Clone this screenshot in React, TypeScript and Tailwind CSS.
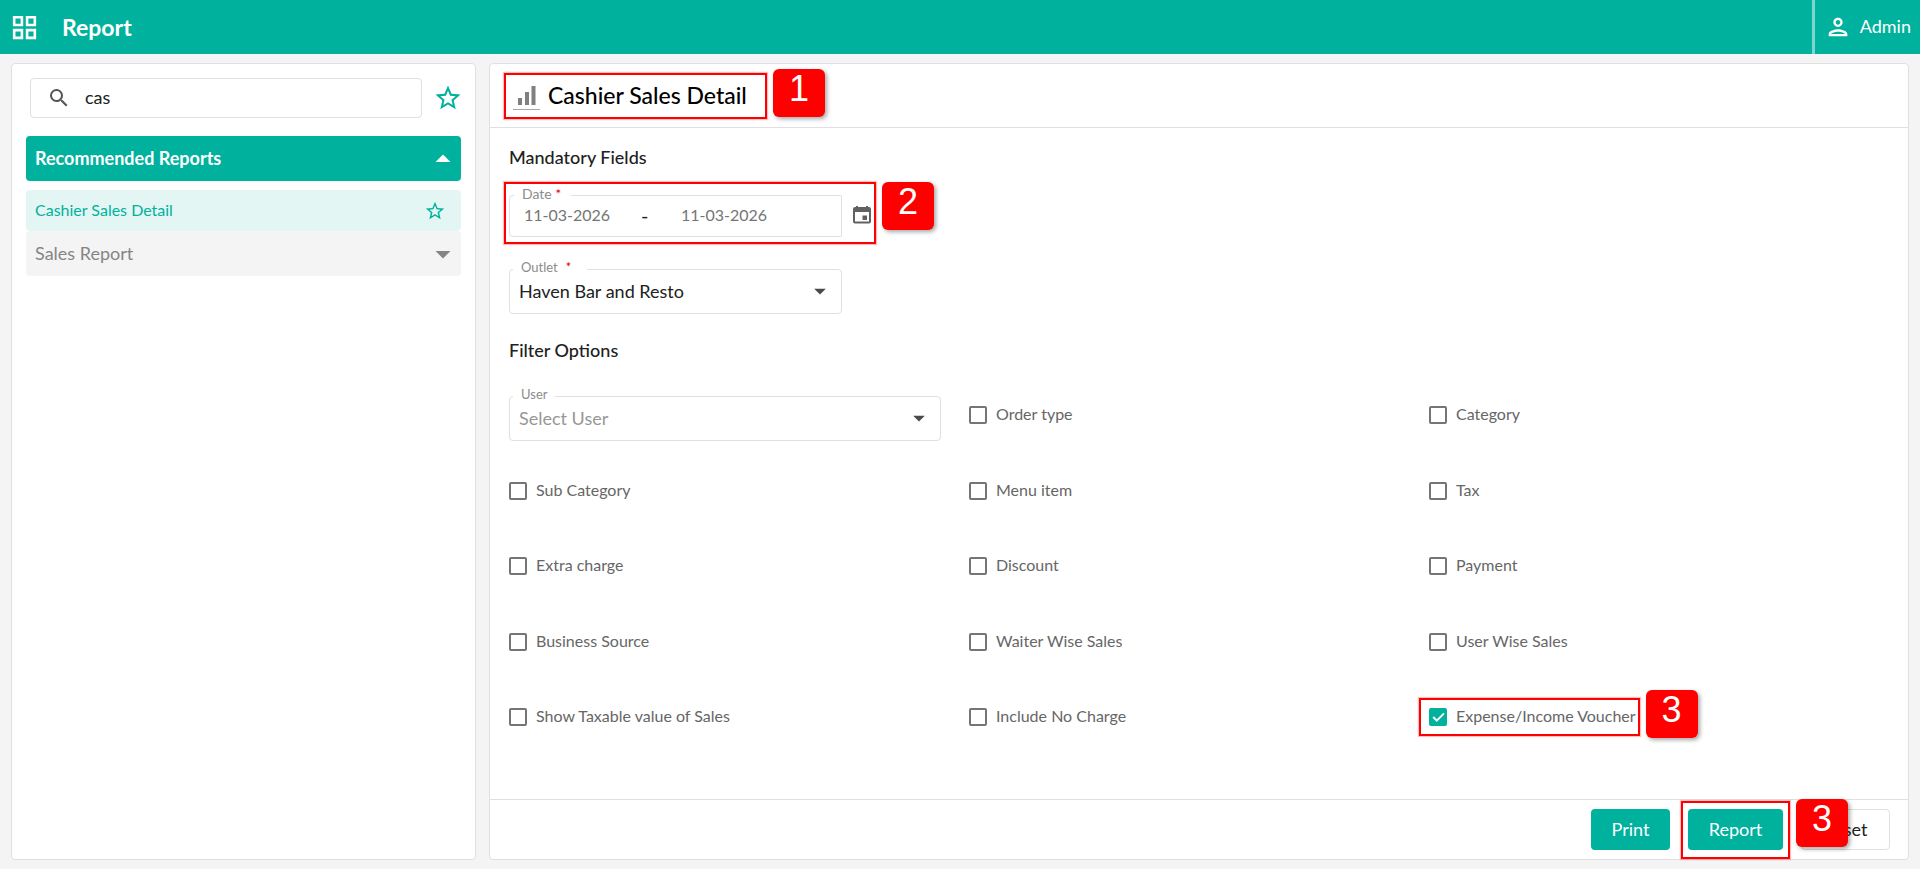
import { useState } from 'react';
import type { ReactNode } from 'react';
import {
  MdArrowDropDown,
  MdArrowDropUp,
  MdOutlineGridView,
  MdOutlinePerson,
  MdSearch,
  MdStarOutline,
} from 'react-icons/md';

interface FilterOption {
  id: string;
  label: string;
  step?: string;
}

const FILTERS: FilterOption[] = [
  { id: 'orderType', label: 'Order type' },
  { id: 'category', label: 'Category' },
  { id: 'subCategory', label: 'Sub Category' },
  { id: 'menuItem', label: 'Menu item' },
  { id: 'tax', label: 'Tax' },
  { id: 'extraCharge', label: 'Extra charge' },
  { id: 'discount', label: 'Discount' },
  { id: 'payment', label: 'Payment' },
  { id: 'businessSource', label: 'Business Source' },
  { id: 'waiterWise', label: 'Waiter Wise Sales' },
  { id: 'userWise', label: 'User Wise Sales' },
  { id: 'taxable', label: 'Show Taxable value of Sales' },
  { id: 'noCharge', label: 'Include No Charge' },
  { id: 'voucher', label: 'Expense/Income Voucher', step: '3' },
];

// Red frame with a numbered badge, drawn over the control it points at
function Step({ n, frame, badge }: { n: string; frame: string; badge: string }) {
  return (
    <div className={`pointer-events-none absolute z-10 border-2 border-[#ff0000] shadow-[0_0_1px_1px_rgba(255,0,0,0.25)] ${frame}`}>
      <span className={`absolute left-full ml-2 flex h-12 w-[52px] justify-center rounded-md bg-[#ff0000] font-['Liberation_Sans',sans-serif] text-4xl leading-10 text-white shadow-[2px_2px_4px_rgba(0,0,0,0.35)] ${badge}`}>
        {n}
      </span>
    </div>
  );
}

function SelectField({ id, label, required, muted, children }: {
  id: string;
  label: string;
  required?: boolean;
  muted?: boolean;
  children: ReactNode;
}) {
  return (
    <div className="relative">
      <label htmlFor={id} className="absolute -top-3 left-1 bg-white px-2 text-[13px] leading-5 text-[#8c8c8c]">
        {label}
        {required && <span className="mx-2 text-[#e00000]">*</span>}
      </label>
      <select
        id={id}
        className={`block h-[45px] w-full appearance-none rounded border border-[#e0e0e0] bg-white pr-12 pb-0.5 pl-[9px] text-lg ${muted ? 'text-[#979797]' : 'text-[#212121]'}`}
      >
        {children}
      </select>
      <MdArrowDropDown className="pointer-events-none absolute top-2 right-2 size-7 text-[#4a4a4a]" />
    </div>
  );
}

function CalendarIcon() {
  return (
    <svg viewBox="0 0 18 18" className="size-[18px]" fill="#616161">
      <path fillRule="evenodd" d="M3 0h2v1h8V0h2v1h1a2 2 0 0 1 2 2v12.500a2 2 0 0 1-2 2H2a2 2 0 0 1-2-2V3a2 2 0 0 1 2-2h1zM2 6v9.500h14V6z" />
      <path d="M9.500 9.500h4.500v4.500H9.500z" />
    </svg>
  );
}

function ChartIcon() {
  return (
    <svg viewBox="0 0 27 30" className="h-[30px] w-[27px]" fill="#808080">
      <rect x="5" y="17" width="4" height="7" />
      <rect x="12" y="11" width="4" height="13" />
      <rect x="18.500" y="5" width="4" height="19" />
      <rect x="0" y="28" width="27" height="1" fill="#a8a8a8" />
    </svg>
  );
}

export default function App() {
  const [search, setSearch] = useState('cas');
  const [checked, setChecked] = useState<Record<string, boolean>>({ voucher: true });

  const toggle = (id: string) => setChecked(prev => ({ ...prev, [id]: !prev[id] }));

  return (
    <div className="flex min-h-screen flex-col bg-[#f4f4f4] font-[Lato,sans-serif] text-[#212121]">
      <header className="flex h-[54px] items-center bg-[#00b19d] text-white">
        <button aria-label="Menu" className="ml-[9px]">
          <MdOutlineGridView className="size-[31px]" />
        </button>
        <h1 className="ml-[22px] text-[23px] leading-7 font-bold">Report</h1>
        <button className="ml-auto flex h-full items-center gap-2 border-l-[3px] border-[#80d5cb] px-[9px] text-lg">
          <MdOutlinePerson className="size-7" />
          <span className="pb-0.5">Admin</span>
        </button>
      </header>

      <main className="flex flex-1 gap-[13px] px-[11px] py-[9px]">
        <aside className="w-[465px] shrink-0 rounded border border-[#e0e0e0] bg-white px-3.5 pt-3.5">
          <div className="-mr-0.5 flex items-center">
            <label className="ml-1 flex h-10 flex-1 items-center gap-3.5 rounded border border-[#e0e0e0] pl-4">
              <MdSearch className="size-6 text-[#555]" />
              <input
                aria-label="Search reports"
                value={search}
                onChange={e => setSearch(e.target.value)}
                className="min-w-0 flex-1 pb-0.5 text-lg outline-none"
              />
            </label>
            <button aria-label="Favourites" className="ml-[11px] text-[#00b19d]">
              <MdStarOutline className="size-[30px]" />
            </button>
          </div>

          <button className="mt-[18px] flex h-[45px] w-full items-center justify-between rounded bg-[#00b19d] pl-[9px] text-lg font-bold text-white">
            <span className="pb-0.5">Recommended Reports</span>
            <MdArrowDropUp className="size-9" />
          </button>
          <div className="mt-[9px] flex h-[41px] items-center justify-between rounded bg-[#e4f6f4] pr-[15px] pl-[9px] text-[#00b19d]">
            <a href="#cashier-sales-detail" className="pb-0.5 text-base">Cashier Sales Detail</a>
            <button aria-label="Add to favourites">
              <MdStarOutline className="size-[22px]" />
            </button>
          </div>
          <button className="flex h-[45px] w-full items-center justify-between rounded bg-[#f4f4f4] pl-[9px] text-lg text-[#858585]">
            <span className="pb-0.5">Sales Report</span>
            <MdArrowDropDown className="size-9" />
          </button>
        </aside>

        <section className="flex flex-1 flex-col rounded border border-[#e0e0e0] bg-white">
          <div className="flex h-16 items-center border-b border-[#e0e0e0] pl-[23px]">
            <div className="relative flex w-60 items-center gap-2">
              <ChartIcon />
              <h2 className="pb-0.5 text-[23px] leading-7 font-medium whitespace-nowrap text-black">Cashier Sales Detail</h2>
              <Step n="1" frame="-inset-y-2 -left-[9px] -right-3.5" badge="-top-1.5" />
            </div>
          </div>

          <div className="flex-1 px-[19px] pt-[17px]">
            <h3 className="text-lg leading-6 font-medium">Mandatory Fields</h3>

            <div className="mt-[26px] flex">
              <div className="relative flex items-center">
                <div className="relative flex h-[42px] w-[333px] items-center rounded-l border border-[#e0e0e0] pb-0.5 pl-3.5 text-base text-[#757575]">
                  <label htmlFor="dateFrom" className="absolute -top-3 left-1 bg-white px-2 pr-2.5 text-sm leading-5 text-[#8c8c8c]">
                    Date <span className="text-[#e00000]">*</span>
                  </label>
                  <input id="dateFrom" defaultValue="11-03-2026" className="w-[117px] outline-none" />
                  <span className="w-10 text-xl leading-6 text-[#212121]">-</span>
                  <input aria-label="Date to" defaultValue="11-03-2026" className="w-[117px] outline-none" />
                </div>
                <button aria-label="Open calendar" className="ml-[11px] pb-0.5">
                  <CalendarIcon />
                </button>
                <Step n="2" frame="-top-[13px] -bottom-[7px] -left-[5px] -right-[5px]" badge="-top-0.5" />
              </div>
            </div>

            <div className="mt-8 w-[333px]">
              <SelectField id="outlet" label="Outlet" required>
                <option>Haven Bar and Resto</option>
              </SelectField>
            </div>

            <h3 className="mt-6 text-lg leading-6 font-medium">Filter Options</h3>

            <div className="mt-[34px] grid h-[378px] grid-cols-3 grid-rows-5 items-start">
              <div className="pr-7">
                <SelectField id="user" label="User" muted>
                  <option>Select User</option>
                </SelectField>
              </div>
              {FILTERS.map(({ id, label, step }) => (
                <div key={id} className="flex">
                  <label className="relative flex h-[38px] items-center gap-[9px] text-base text-[#666]">
                    <span className="relative flex size-[18px]">
                      <input
                        type="checkbox"
                        checked={!!checked[id]}
                        onChange={() => toggle(id)}
                        className="size-[18px] appearance-none rounded-[2px] border-2 border-[#757575] checked:border-[#00b19d] checked:bg-[#00b19d]"
                      />
                      {checked[id] && (
                        <svg viewBox="0 0 18 18" className="pointer-events-none absolute inset-0 size-[18px]" fill="none" stroke="white" strokeWidth="2">
                          <path d="M4.200 9l3.600 3.600L15 5.400" />
                        </svg>
                      )}
                    </span>
                    <span className="pb-0.5">{label}</span>
                    {step && <Step n={step} frame="inset-y-0 -left-2.5 -right-1" badge="-top-2.5" />}
                  </label>
                </div>
              ))}
            </div>
          </div>

          <div className="flex h-[60px] items-center justify-end gap-[18px] border-t border-[#e0e0e0] pr-[18px] text-lg">
            <button className="h-[41px] w-[79px] rounded bg-[#00b19d] pb-0.5 text-white">Print</button>
            <div className="relative">
              <button className="block h-[41px] w-[95px] rounded bg-[#00b19d] pb-0.5 text-white">Report</button>
              <Step n="3" frame="-top-2 -bottom-[9px] -inset-x-[7px]" badge="-top-1" />
            </div>
            <button className="h-[41px] w-[89px] rounded border border-[#e0e0e0] bg-white pb-0.5">Reset</button>
          </div>
        </section>
      </main>
    </div>
  );
}
